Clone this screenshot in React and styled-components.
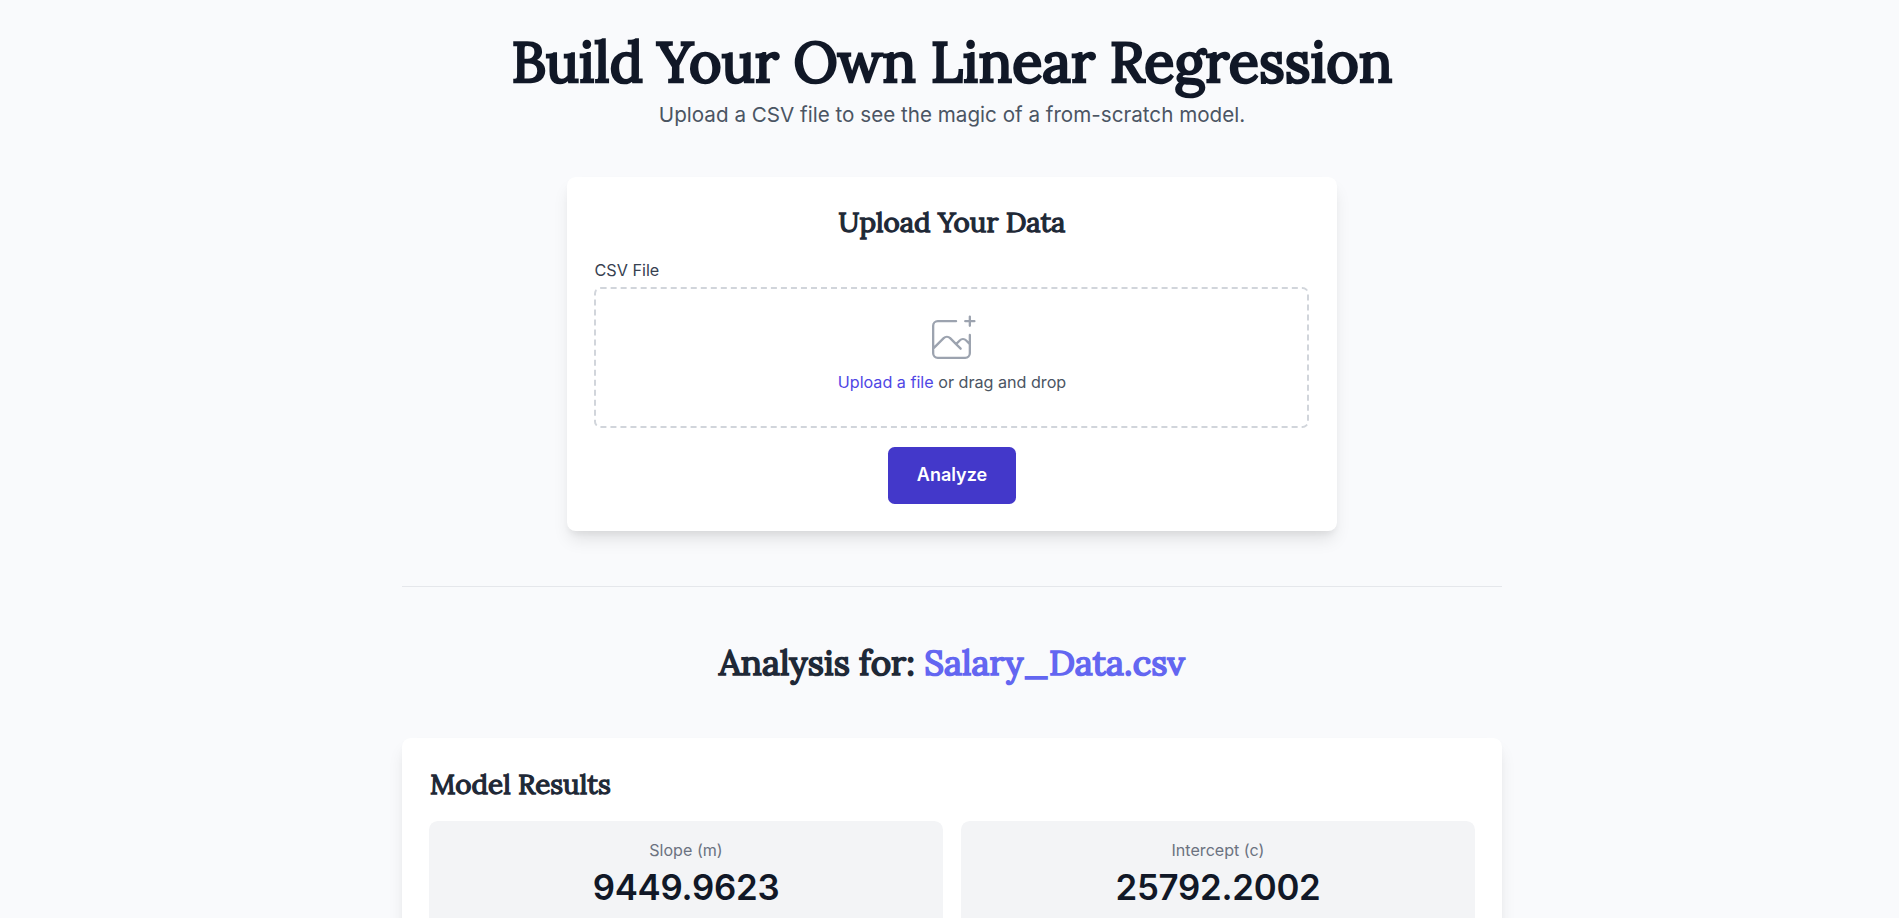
import React from "react";
import styled, { createGlobalStyle, css } from "styled-components";

const GlobalStyle = createGlobalStyle`
  *, *::before, *::after { box-sizing: border-box; }
  html, body { margin: 0; padding: 0; }
  body {
    height: 918px;
    overflow: hidden;
    background: #f9fafc;
    color: #1f2937;
    font-family: Inter, "Liberation Sans", sans-serif;
  }
  h1, h2, h3, p { margin: 0; }
`;

const heading = css`
  font-family: Lora, "Liberation Serif", serif;
  font-weight: 400;
  -webkit-text-stroke: 0.048em currentColor;
  white-space: nowrap;
`;

const Page = styled.main`
  width: 1100px;
  margin: 0 auto;
  padding-top: 28px;
`;

const Shell = styled.div`
  padding-left: 5px;
`;

const Header = styled.header`
  text-align: center;
  margin-bottom: 46px;
`;

const Title = styled.h1`
  ${heading}
  font-size: 55.65px;
  line-height: 68px;
  color: #111827;
`;

const Subtitle = styled.p`
  margin-top: 2px;
  font-size: 20.63px;
  font-weight: 400;
  line-height: 33px;
  color: #4b5563;
`;

const Card = styled.section`
  background: #fff;
  border-radius: 8.8px;
  box-shadow: 0 11px 16.5px -3.3px rgba(0, 0, 0, 0.1),
    0 4.4px 6.6px -2.2px rgba(0, 0, 0, 0.05);
`;

const UploadCard = styled(Card)`
  width: 770px;
  height: 354px;
  margin: 0 auto;
  padding: 25px 28px 26px 27px;
  display: flex;
  flex-direction: column;
`;

const CardTitle = styled.h3`
  ${heading}
  font-size: 27.75px;
  line-height: 40px;
  padding-left: 1px;
  text-align: ${(p) => p.$align || "left"};
  color: #1f2937;
`;

const FieldLabel = styled.label`
  margin-top: 17px;
  padding-left: 0.5px;
  font-size: 16.2px;
  font-weight: 400;
  line-height: 22px;
  color: #374151;
`;

const DropZone = styled.div`
  margin-top: 6px;
  height: 141px;
  flex: none;
  border: 2px dashed #d1d5db;
  border-radius: 6.6px;
  display: flex;
  flex-direction: column;
  align-items: center;
  padding-top: 23px;
`;

const DropIcon = styled.svg`
  width: 55px;
  height: 55px;
  flex: none;
  color: #9ca3af;
`;

const DropText = styled.p`
  margin-top: 3px;
  padding-left: 1px;
  font-size: 16.15px;
  line-height: 24px;
  color: #4b5563;
`;

const DropLink = styled.span`
  color: #4f46e5;
`;

const AnalyzeButton = styled.button`
  align-self: center;
  margin-top: 19px;
  padding: 0 0 1px 1px;
  width: 128px;
  height: 57px;
  flex: none;
  border: 0;
  border-radius: 6.6px;
  background: #4338ca;
  color: #fff;
  font: 600 18px/26px Inter, sans-serif;
`;

const Divider = styled.hr`
  margin: 55px 0 0;
  border: 0;
  height: 1px;
  background: #e5e7eb;
`;

const AnalysisTitle = styled.h2`
  ${heading}
  margin: 51px 0;
  font-size: 34.9px;
  line-height: 49px;
  text-align: center;
  color: #1f2937;
`;

const FileName = styled.span`
  color: #6366f1;
`;

const ResultsCard = styled(Card)`
  padding: 26px 27px;
`;

const Metrics = styled.div`
  margin-top: 17px;
  display: grid;
  grid-template-columns: 1fr 1fr;
  gap: 18px;
`;

const Metric = styled.div`
  background: #f3f4f6;
  border-radius: 8.8px;
  padding: 17px;
  height: 114px;
  text-align: center;
`;

const MetricLabel = styled.p`
  font-size: 16.1px;
  line-height: 24px;
  color: #6b7280;
`;

const MetricValue = styled.p`
  font-size: 34.8px;
  font-weight: 600;
  letter-spacing: -0.25px;
  line-height: 50px;
  color: #111827;
`;

const metrics = [
  { label: "Slope (m)", value: "9449.9623" },
  { label: "Intercept (c)", value: "25792.2002" },
];

export default function App() {
  return (
    <Shell>
      <GlobalStyle />
      <Page>
        <Header>
          <Title>Build Your Own Linear Regression</Title>
          <Subtitle>Upload a CSV file to see the magic of a from-scratch model.</Subtitle>
        </Header>
        <UploadCard>
          <CardTitle $align="center">Upload Your Data</CardTitle>
          <FieldLabel>CSV File</FieldLabel>
          <DropZone>
            <DropIcon viewBox="0 0 48 48" fill="none" stroke="currentColor" aria-hidden="true">
              <path
                d="M28 8H12a4 4 0 00-4 4v20m32-12v8m0 0v8a4 4 0 01-4 4H12a4 4 0 01-4-4v-4m32-4l-3.172-3.172a4 4 0 00-5.656 0L28 28M8 32l9.172-9.172a4 4 0 015.656 0L28 28m0 0l4 4m4-24h8m-4-4v8"
                strokeWidth="2"
                strokeLinecap="round"
                strokeLinejoin="round"
              />
            </DropIcon>
            <DropText>
              <DropLink>Upload a file</DropLink> or drag and drop
            </DropText>
          </DropZone>
          <AnalyzeButton type="button">Analyze</AnalyzeButton>
        </UploadCard>
        <Divider />
        <AnalysisTitle>
          Analysis for: <FileName>Salary_Data.csv</FileName>
        </AnalysisTitle>
        <ResultsCard>
          <CardTitle>Model Results</CardTitle>
          <Metrics>
            {metrics.map((m) => (
              <Metric key={m.label}>
                <MetricLabel>{m.label}</MetricLabel>
                <MetricValue>{m.value}</MetricValue>
              </Metric>
            ))}
          </Metrics>
        </ResultsCard>
      </Page>
    </Shell>
  );
}
